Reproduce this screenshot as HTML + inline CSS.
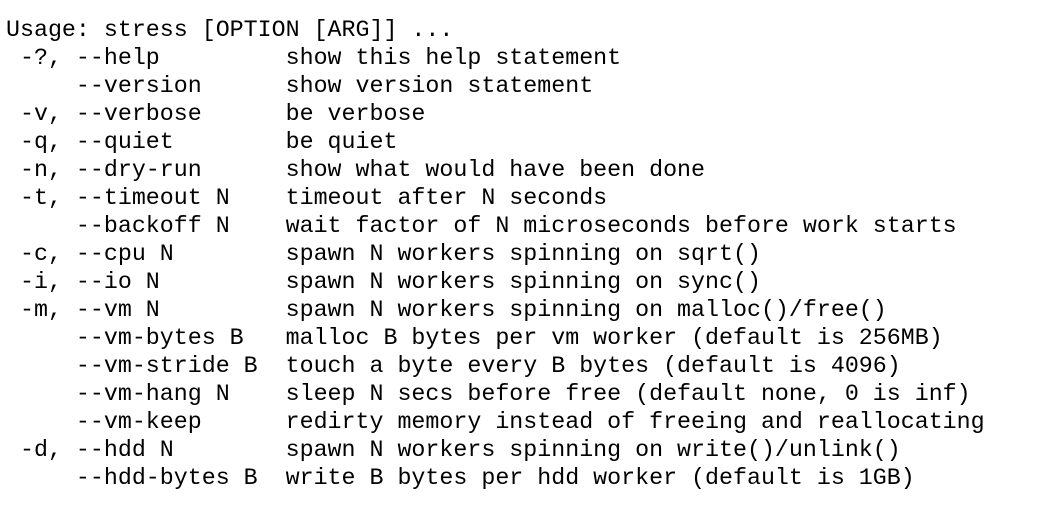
<!DOCTYPE html><html><head><style>
body{margin:0;background:#fff;width:1040px;height:510px;overflow:hidden}
pre{margin:0;position:absolute;left:6px;top:16px;font-family:"Liberation Mono",monospace;font-size:23.3px;line-height:28px;color:#000}
</style></head><body><pre>Usage: stress [OPTION [ARG]] ...
 -?, --help         show this help statement
     --version      show version statement
 -v, --verbose      be verbose
 -q, --quiet        be quiet
 -n, --dry-run      show what would have been done
 -t, --timeout N    timeout after N seconds
     --backoff N    wait factor of N microseconds before work starts
 -c, --cpu N        spawn N workers spinning on sqrt()
 -i, --io N         spawn N workers spinning on sync()
 -m, --vm N         spawn N workers spinning on malloc()/free()
     --vm-bytes B   malloc B bytes per vm worker (default is 256MB)
     --vm-stride B  touch a byte every B bytes (default is 4096)
     --vm-hang N    sleep N secs before free (default none, 0 is inf)
     --vm-keep      redirty memory instead of freeing and reallocating
 -d, --hdd N        spawn N workers spinning on write()/unlink()
     --hdd-bytes B  write B bytes per hdd worker (default is 1GB)</pre></body></html>
